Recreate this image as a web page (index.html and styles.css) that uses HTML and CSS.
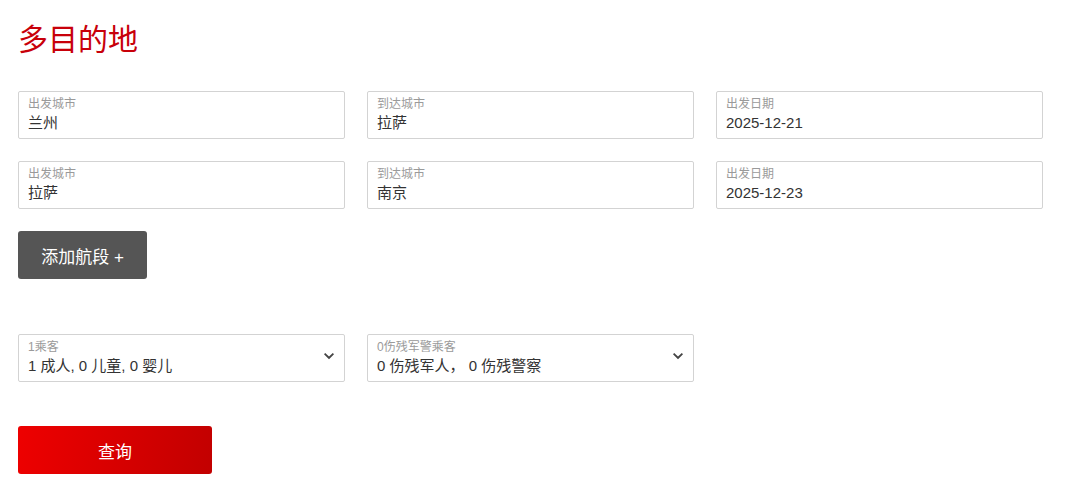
FILE: index.html
```html
<!DOCTYPE html>
<html lang="zh-CN">
<head>
<meta charset="utf-8">
<title>多目的地</title>
<link rel="stylesheet" href="styles.css">
</head>
<body>
<main class="page">
  <h1 class="title">多目的地</h1>

  <div class="legs">
    <div class="field"><span class="label">出发城市</span><span class="value">兰州</span></div>
    <div class="field"><span class="label">到达城市</span><span class="value">拉萨</span></div>
    <div class="field"><span class="label">出发日期</span><span class="value">2025-12-21</span></div>

    <div class="field"><span class="label">出发城市</span><span class="value">拉萨</span></div>
    <div class="field"><span class="label">到达城市</span><span class="value">南京</span></div>
    <div class="field"><span class="label">出发日期</span><span class="value">2025-12-23</span></div>
  </div>

  <button class="btn-add" type="button">添加航段 +</button>

  <div class="pax">
    <div class="field select">
      <span class="label">1乘客</span><span class="value">1 成人, 0 儿童, 0 婴儿</span>
      <svg class="chev" viewBox="0 0 10 7" width="10" height="7"><path d="M0 1.2 L1.2 0 L5 3.6 L8.8 0 L10 1.2 L5 6.2 Z" fill="#444"/></svg>
    </div>
    <div class="field select">
      <span class="label">0伤残军警乘客</span><span class="value">0 伤残军人， 0 伤残警察</span>
      <svg class="chev" viewBox="0 0 10 7" width="10" height="7"><path d="M0 1.2 L1.2 0 L5 3.6 L8.8 0 L10 1.2 L5 6.2 Z" fill="#444"/></svg>
    </div>
  </div>

  <button class="btn-search" type="button">查询</button>
</main>
</body>
</html>
```

FILE: styles.css
```css
* { box-sizing: border-box; }
html, body { margin: 0; padding: 0; background: #fff; }
body {
  font-family: "Liberation Sans", "Noto Sans CJK SC", Arial, sans-serif;
  color: #333;
}
.page {
  padding: 19px 18px 0 18px;
  display: flex;
  flex-direction: column;
  align-items: flex-start;
}
.title {
  margin: 0 0 36px 0;
  font-family: "Noto Sans CJK SC", sans-serif;
  font-weight: 400;
  font-size: 30px;
  line-height: 36px;
  color: #c8000a;
}
.legs, .pax {
  display: grid;
  grid-template-columns: repeat(3, 327px);
  column-gap: 22px;
  row-gap: 22px;
}
.field {
  position: relative;
  height: 48px;
  border: 1px solid #d3d3d3;
  border-radius: 2px;
  padding: 4px 9px 4px 9px;
  display: flex;
  flex-direction: column;
  background: #fff;
}
.label {
  font-size: 12px;
  line-height: 16px;
  color: #9a9a9a;
}
.value {
  font-size: 15px;
  line-height: 22px;
  color: #333;
}
.chev {
  position: absolute;
  right: 10px;
  top: 18px;
}
.btn-add {
  margin-top: 22px;
  height: 48px;
  width: 129px;
  border: none;
  border-radius: 3px;
  background: #555;
  color: #fff;
  font-family: "Liberation Sans", "Noto Sans CJK SC", sans-serif;
  font-size: 17px;
  padding: 0;
}
.pax { margin-top: 55px; }
.btn-search {
  margin-top: 44px;
  height: 48px;
  width: 194px;
  border: none;
  border-radius: 3px;
  background: linear-gradient(100deg, #ee0000 0%, #c20000 100%);
  color: #fff;
  font-family: "Liberation Sans", "Noto Sans CJK SC", sans-serif;
  font-size: 17px;
  padding: 0;
}
```
